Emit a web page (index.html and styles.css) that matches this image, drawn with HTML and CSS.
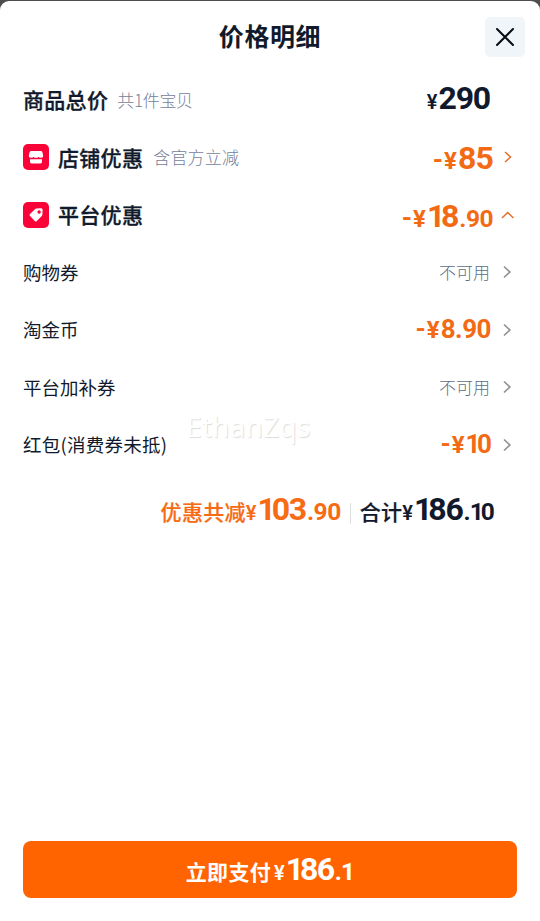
FILE: index.html
```html
<!DOCTYPE html>
<html lang="zh-CN">
<head>
<meta charset="utf-8">
<title>价格明细</title>
<link rel="stylesheet" href="styles.css">
</head>
<body>
<main class="sheet">
  <header class="header">
    <h1 class="title">价格明细</h1>
    <button class="close" aria-label="关闭"><svg width="40" height="40" viewBox="0 0 40 40"><path d="M12 12l16 16M28 12L12 28"/></svg></button>
  </header>

  <section class="rows">
    <div class="row">
      <span class="name">商品总价</span><span class="note">共1件宝贝</span>
      <span class="amount dark"><span class="yen small">¥</span><span class="int">290</span></span>
    </div>
    <div class="row">
      <svg class="badge" viewBox="0 0 26 26"><rect width="26" height="26" rx="5"/><path class="fill" d="M8.200 7h9.600q1.200 0 1.600 1.200l.8 3.200q.2 2.400-2 2.400-1.500 0-2.600-.9-1.100.9-2.600.9t-2.600-.9q-1.100.9-2.600.9-2.200 0-2-2.400l.8-3.200Q7 7 8.200 7zM7 15.300h12v2.700q0 1.400-1.400 1.400H8.400q-1.400 0-1.400-1.400z"/></svg>
      <span class="name">店铺优惠</span><span class="note shifted">含官方立减</span>
      <span class="amount low"><span class="minus">-</span><span class="yen">¥</span><span class="int wide">85</span></span>
      <svg class="arrow orange" viewBox="0 0 14 14"><path d="M4 2l5.500 5L4 12"/></svg>
    </div>
    <div class="row">
      <svg class="badge" viewBox="0 0 26 26"><rect width="26" height="26" rx="5"/><path class="fill" fill-rule="evenodd" d="M13.300 6.600l4.800-.3q1.500 0 1.500 1.500l-.2 4.700q0 .8-.6 1.400l-5 5q-1 1-2 0L7 14.100q-1-1 0-2l5-4.900q.5-.5 1.300-.6zM16.100 8.300a1.700 1.700 0 100 3.400 1.700 1.700 0 000-3.400z"/></svg>
      <span class="name">平台优惠</span>
      <span class="amount low"><span class="minus">-</span><span class="yen">¥</span><span class="int"><span class="one">1</span>8</span><span class="dec">.90</span></span>
      <svg class="arrow orange" viewBox="0 0 14 14"><path d="M1 10l5.700-5.500L12.400 10"/></svg>
    </div>
    <div class="row">
      <span class="item">购物券</span><span class="off">不可用</span>
      <svg class="arrow" viewBox="0 0 14 14"><path d="M3 1.500l5.800 5.500L3 12.500"/></svg>
    </div>
    <div class="row">
      <span class="item">淘金币</span>
      <span class="amount"><span class="minus">-</span><span class="yen">¥</span><span class="mid">8.90</span></span>
      <svg class="arrow" viewBox="0 0 14 14"><path d="M3 1.500l5.800 5.500L3 12.500"/></svg>
    </div>
    <div class="row">
      <span class="item">平台加补券</span><span class="off">不可用</span>
      <svg class="arrow" viewBox="0 0 14 14"><path d="M3 1.500l5.800 5.500L3 12.500"/></svg>
    </div>
    <div class="row">
      <span class="item spaced">红包(消费券未抵)</span>
      <span class="amount"><span class="minus">-</span><span class="yen">¥</span><span class="mid tight"><span class="one">1</span>0</span></span>
      <svg class="arrow" viewBox="0 0 14 14"><path d="M3 1.500l5.800 5.500L3 12.500"/></svg>
    </div>
  </section>

  <section class="summary">
    <span class="sum saved"><span class="label">优惠共减</span><span class="yen small">¥</span><span class="int"><span class="one">1</span>03</span><span class="dec">.90</span></span>
    <span class="divider"></span>
    <span class="sum total"><span class="label">合计</span><span class="yen small">¥</span><span class="int"><span class="one">1</span>86</span><span class="dec narrow">.<span class="one">1</span>0</span></span>
  </section>

  <button class="pay"><span class="sum"><span class="label">立即支付</span><span class="yen small">¥</span><span class="int"><span class="one">1</span>86</span><span class="dec narrow">.1</span></span></button>
</main>
<span class="watermark">EthanZqs</span>
</body>
</html>
```
FILE: styles.css
```css
* { box-sizing: border-box; }
body {
  margin: 0;
  height: 921px;
  padding-top: 1px;
  background: #4e4c4d;
  color: #111a2c;
  font-family: "Noto Sans CJK SC", sans-serif;
  overflow: hidden;
}
button { border: 0; padding: 0; font: inherit; }
.sheet {
  height: 920px;
  padding: 0 23px 23px;
  display: flex;
  flex-direction: column;
  background: #fff;
  border-radius: 9px 9px 0 0;
}
.header {
  height: 70px;
  flex: none;
  display: grid;
  grid-template-columns: 40px 1fr 40px;
  margin-right: -8px;
  margin-left: -8px;
}
.title {
  grid-column: 2;
  margin: 15px 0 0;
  text-align: center;
  font-size: 25px;
  line-height: 38px;
  font-weight: 700;
  letter-spacing: .6px;
}
.close {
  height: 40px;
  margin-top: 16px;
  background: #f0f5f9;
  border-radius: 5px;
}
.close svg { display: block; fill: none; stroke: #070b12; stroke-width: 2; stroke-linecap: round; }
.row { height: 57.5px; display: flex; align-items: center; }
.badge { width: 26px; height: 26px; margin-right: 9px; fill: #f90338; }
.badge .fill { fill: #fff; }
.name {
  font-size: 21px;
  font-weight: 500;
  letter-spacing: .3px;
  line-height: 30px;
  padding-bottom: 1px;
  -webkit-text-stroke: .3px currentColor;
}
.note { margin-left: 9px; font-size: 17px; font-weight: 300; color: #74819b; line-height: 26px; letter-spacing: -.3px; }
.note.shifted { margin-left: 10px; letter-spacing: .2px; }
.item { font-size: 18.500px; line-height: 28px; padding-bottom: 1px; }
.item.spaced { letter-spacing: .25px; }
.off { margin-left: auto; margin-right: 11px; font-size: 17px; font-weight: 300; color: #5c6f88; padding-bottom: 1px; }
.amount {
  display: flex;
  align-items: baseline;
  margin-left: auto;
  margin-right: 10px;
  color: #f26a14;
  font-family: Roboto, sans-serif;
  font-weight: 700;
  line-height: 34px;
}
.amount.dark { color: #111a2c; margin-right: 27px; padding-top: 1px; }
.amount.low { margin-right: 8px; padding-top: 5px; }
.arrow {
  width: 14px;
  height: 14px;
  fill: none;
  stroke: #929292;
  stroke-width: 1.700;
  margin-right: 2px;
}
.arrow.orange { stroke: #e66d29; stroke-width: 1.500; }
.minus { font-size: 26px; margin-right: 1px; }
.yen { font-size: 24px; margin-right: 1px; }
.yen.small { font-size: 20px; font-weight: 600; }
.int { font-size: 32px; letter-spacing: -1.200px; }
.int.wide { letter-spacing: -.8px; }
.one { letter-spacing: -.13em; }
.dec { font-size: 24.500px; margin-left: 1px; letter-spacing: -.5px; }
.dec.narrow { letter-spacing: -.8px; }
.dec.narrow .one { letter-spacing: -.13em; }
.mid { font-size: 26px; letter-spacing: -.5px; }
.mid.tight { letter-spacing: -1px; }
.summary {
  height: 52px;
  margin-top: 11px;
  margin-right: 23px;
  display: flex;
  align-items: center;
  justify-content: flex-end;
}
.sum { display: flex; align-items: baseline; font-family: Roboto, sans-serif; font-weight: 700; line-height: 34px; }
.sum .label {
  font-family: "Noto Sans CJK SC", sans-serif;
  font-size: 21px;
  font-weight: 500;
  letter-spacing: .3px;
  -webkit-text-stroke: .2px currentColor;
}
.saved { color: #f66b13; }
.divider { width: 1px; height: 21px; margin: 5px 9px 0; background: #ddd; }
.pay {
  height: 57px;
  margin-top: auto;
  border-radius: 8px;
  background: #ff6400;
  color: #fff;
  display: flex;
  align-items: center;
  justify-content: center;
}
.pay .sum { padding-top: 2px; }
.pay .label { font-weight: 700; margin-right: 3px; -webkit-text-stroke: 0; }
.pay .int { letter-spacing: -1.500px; }
.watermark {
  position: absolute;
  left: 186px;
  top: 407px;
  font-family: "Noto Sans", sans-serif;
  font-size: 28px;
  line-height: 38px;
  letter-spacing: .2px;
  color: #fff;
  text-shadow: 1px 1px 1px #ddd;
}
```
